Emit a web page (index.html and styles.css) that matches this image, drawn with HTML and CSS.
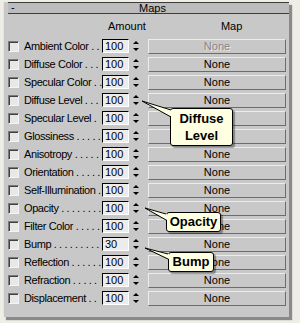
FILE: index.html
```html
<!DOCTYPE html>
<html>
<head>
<meta charset="utf-8">
<link rel="stylesheet" href="styles.css">
</head>
<body>
<div class="screen">
  <div class="panel">
    <div class="rollout">
      <span class="minus">-</span>
      <span class="title">Maps</span>
    </div>
    <div class="head">
      <span class="h-amount">Amount</span>
      <span class="h-map">Map</span>
    </div>
    <div class="rows">
      <div class="row"><span class="chk"></span><span class="lbl">Ambient Color . .</span><span class="field">100</span><span class="arrows"><i class="up"></i><i class="dn"></i></span><button class="map off">None</button></div>
      <div class="row"><span class="chk"></span><span class="lbl">Diffuse Color . . .</span><span class="field">100</span><span class="arrows"><i class="up"></i><i class="dn"></i></span><button class="map">None</button></div>
      <div class="row"><span class="chk"></span><span class="lbl">Specular Color . .</span><span class="field">100</span><span class="arrows"><i class="up"></i><i class="dn"></i></span><button class="map">None</button></div>
      <div class="row"><span class="chk"></span><span class="lbl">Diffuse Level . . .</span><span class="field">100</span><span class="arrows"><i class="up"></i><i class="dn"></i></span><button class="map">None</button></div>
      <div class="row"><span class="chk"></span><span class="lbl">Specular Level .</span><span class="field">100</span><span class="arrows"><i class="up"></i><i class="dn"></i></span><button class="map">None</button></div>
      <div class="row"><span class="chk"></span><span class="lbl">Glossiness . . . . .</span><span class="field">100</span><span class="arrows"><i class="up"></i><i class="dn"></i></span><button class="map">None</button></div>
      <div class="row"><span class="chk"></span><span class="lbl">Anisotropy . . . . .</span><span class="field">100</span><span class="arrows"><i class="up"></i><i class="dn"></i></span><button class="map">None</button></div>
      <div class="row"><span class="chk"></span><span class="lbl">Orientation . . . . .</span><span class="field">100</span><span class="arrows"><i class="up"></i><i class="dn"></i></span><button class="map">None</button></div>
      <div class="row"><span class="chk"></span><span class="lbl">Self-Illumination .</span><span class="field">100</span><span class="arrows"><i class="up"></i><i class="dn"></i></span><button class="map">None</button></div>
      <div class="row"><span class="chk"></span><span class="lbl">Opacity . . . . . . . .</span><span class="field">100</span><span class="arrows"><i class="up"></i><i class="dn"></i></span><button class="map">None</button></div>
      <div class="row"><span class="chk"></span><span class="lbl">Filter Color . . . . .</span><span class="field">100</span><span class="arrows"><i class="up"></i><i class="dn"></i></span><button class="map">None</button></div>
      <div class="row"><span class="chk"></span><span class="lbl">Bump . . . . . . . . .</span><span class="field">30</span><span class="arrows"><i class="up"></i><i class="dn"></i></span><button class="map">None</button></div>
      <div class="row"><span class="chk"></span><span class="lbl">Reflection . . . . . .</span><span class="field">100</span><span class="arrows"><i class="up"></i><i class="dn"></i></span><button class="map">None</button></div>
      <div class="row"><span class="chk"></span><span class="lbl">Refraction . . . . .</span><span class="field">100</span><span class="arrows"><i class="up"></i><i class="dn"></i></span><button class="map">None</button></div>
      <div class="row"><span class="chk"></span><span class="lbl">Displacement . .</span><span class="field">100</span><span class="arrows"><i class="up"></i><i class="dn"></i></span><button class="map">None</button></div>
    </div>
  </div>

  <!-- callout balloons laid over the rollout -->
  <div class="callout c-diffuse">Diffuse<br>Level</div>
  <div class="callout c-opacity">Opacity</div>
  <div class="callout c-bump">Bump</div>
  <svg class="tails" width="300" height="323" viewBox="0 0 300 323">
    <polygon points="142,101 172,110 172,117" fill="#ffffe1"/>
    <polyline points="171,110 142,101 171,117" fill="none" stroke="#000" stroke-width="1"/>
    <polygon points="145,208 167,214 167,220" fill="#ffffe1"/>
    <polyline points="166,214 145,208 166,220" fill="none" stroke="#000" stroke-width="1"/>
    <polygon points="145,248 169,254 169,259" fill="#ffffe1"/>
    <polyline points="168,254 145,248 168,259" fill="none" stroke="#000" stroke-width="1"/>
  </svg>
</div>
</body>
</html>
```

FILE: styles.css
```css
body {
  margin: 0;
  background: #efeee6;
  font-family: "Liberation Sans", Arial, sans-serif;
  font-size: 11px;
  color: #000;
}
.screen {
  position: relative;
  width: 300px;
  height: 323px;
  overflow: hidden;
}
.panel {
  margin: 2px 0 0 3px;
  width: 286px;
  height: 315px;
  box-sizing: border-box;
  background: #c8c8c8;
  border-left: 1px solid #e4e4e4;
  box-shadow: 3px 3px 1px #8a8a8a;
}
.rollout {
  position: relative;
  margin: 1px 0 0 4px;
  width: 281px;
  height: 10px;
  background: #bcbcbc;
  border-top: 1px solid #3c3c3c;
  border-bottom: 1px solid #3c3c3c;
  line-height: 10px;
  font-size: 11px;
}
.minus {
  position: absolute;
  left: 3px;
  top: -1px;
}
.title {
  display: block;
  text-align: center;
  padding-left: 8px;
}
.head {
  height: 23px;
  display: flex;
  align-items: center;
}
.h-amount {
  margin-left: 104px;
}
.h-map {
  margin-left: 75px;
}
.row {
  height: 18px;
  display: flex;
  align-items: center;
}
.chk {
  width: 9px;
  height: 9px;
  margin-left: 4px;
  background: #e8e8e8;
  border: 1px solid;
  border-color: #7a7a7a #f4f4f4 #f4f4f4 #7a7a7a;
  box-shadow: inset 1px 1px 0 #404040;
}
.lbl {
  width: 78px;
  margin-left: 5px;
  white-space: nowrap;
  letter-spacing: -0.4px;
}
.field {
  width: 23px;
  height: 12px;
  line-height: 12px;
  padding-left: 2px;
  background: #ececec;
  border: 1px solid;
  border-color: #000 #fff #fff #000;
  font-size: 11px;
}
.arrows {
  width: 8px;
  height: 14px;
  margin-left: 3px;
  display: flex;
  flex-direction: column;
  justify-content: space-around;
  align-items: center;
}
.arrows i {
  width: 0;
  height: 0;
  border-left: 3px solid transparent;
  border-right: 3px solid transparent;
}
.arrows .up {
  border-bottom: 3px solid #000;
}
.arrows .dn {
  border-top: 3px solid #000;
}
.map {
  width: 138px;
  height: 15px;
  margin-left: 8px;
  padding: 0;
  background: #c8c8c8;
  border: 1px solid;
  border-color: #ececec #6c6c6c #6c6c6c #ececec;
  font-family: "Liberation Sans", Arial, sans-serif;
  font-size: 11px;
  color: #000;
  line-height: 13px;
}
.map.off {
  color: #868686;
  text-shadow: 1px 1px 0 #e6e6e6;
}
.callout {
  position: absolute;
  background: #ffffe1;
  border: 1px solid #000;
  border-radius: 3px;
  box-shadow: 2px 2px 1px rgba(0, 0, 0, 0.35);
  font-weight: bold;
  font-size: 13px;
  text-align: center;
  box-sizing: border-box;
}
.c-diffuse {
  left: 170px;
  top: 108px;
  width: 63px;
  height: 38px;
  line-height: 17px;
  padding-top: 1px;
}
.c-opacity {
  left: 166px;
  top: 212px;
  width: 55px;
  height: 20px;
  line-height: 18px;
}
.c-bump {
  left: 168px;
  top: 252px;
  width: 46px;
  height: 20px;
  line-height: 18px;
}
.tails {
  position: absolute;
  left: 0;
  top: 0;
  pointer-events: none;
}
```
